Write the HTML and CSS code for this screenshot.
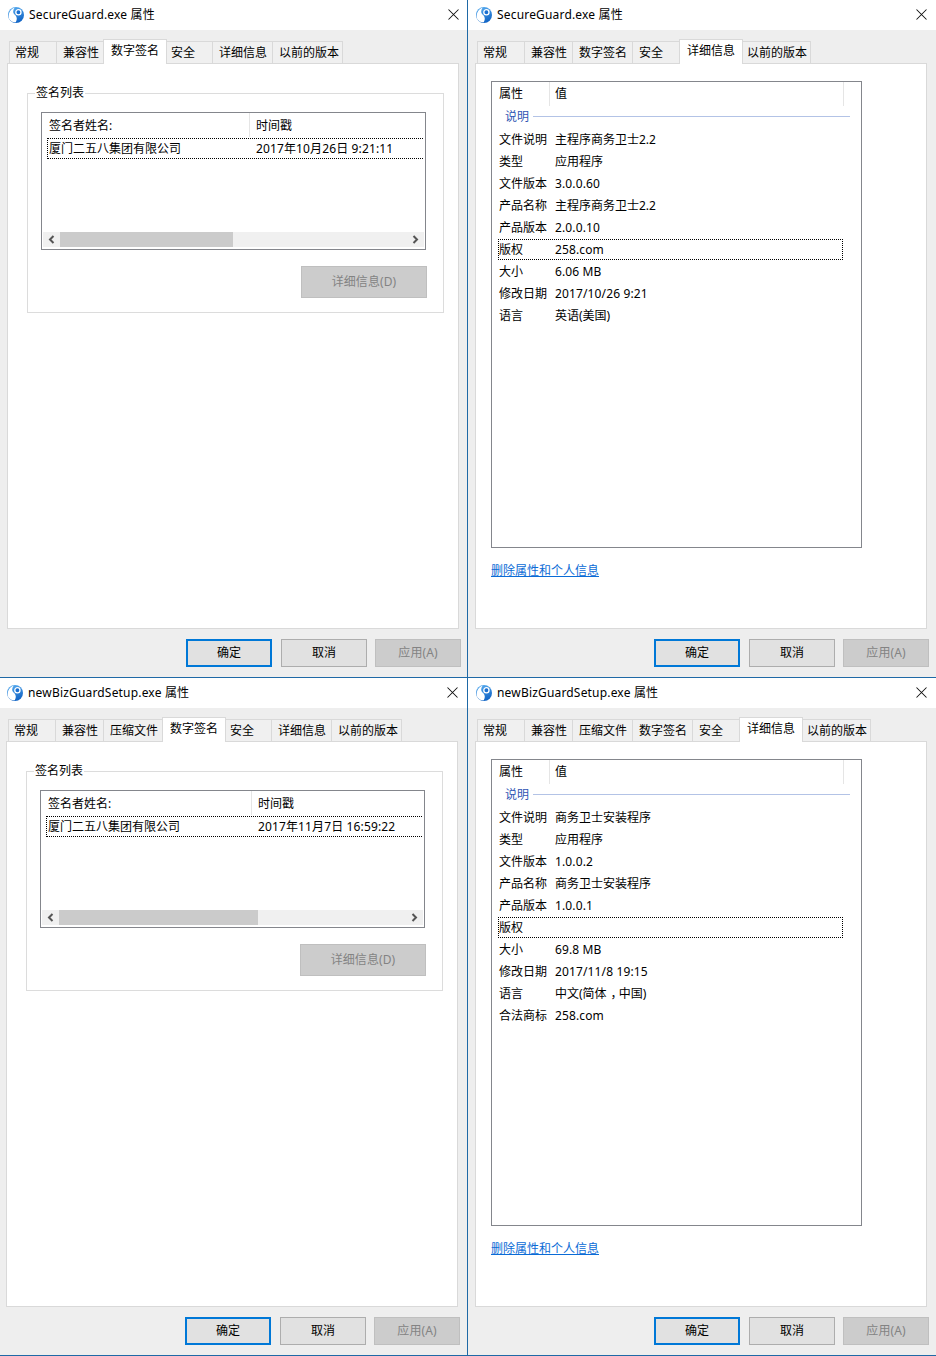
FILE: index.html
```html
<!DOCTYPE html>
<html lang="zh-CN">
<head>
<meta charset="utf-8">
<title>属性</title>
<link rel="stylesheet" href="styles.css">
</head>
<body>
<svg class="defs" width="0" height="0" aria-hidden="true">
  <defs>
    <linearGradient id="orb" x1="0.2" y1="0" x2="0.6" y2="1">
      <stop offset="0" stop-color="#5aaef0"/>
      <stop offset="1" stop-color="#0f62c4"/>
    </linearGradient>
    <symbol id="app" viewBox="0 0 16 16">
      <circle cx="8" cy="8" r="8" fill="url(#orb)"/>
      <path d="M1 11.5C-.2 7 2 2.5 6.5.8 4.6 3.6 4.8 6.2 6.8 7.8c2 1.6 2.8 4.4 1 7.4-3 .4-5.6-1.2-6.8-3.7z" fill="#fff"/>
      <circle cx="10.4" cy="5.2" r="2.6" fill="#1a6fd0" stroke="#fff" stroke-width="1.3"/>
    </symbol>
    <symbol id="close" viewBox="0 0 11 11">
      <path d="M.5.5l10 10M10.5.5l-10 10" stroke="#111" stroke-width="1.05" fill="none"/>
    </symbol>
    <symbol id="left" viewBox="0 0 7 9">
      <path d="M5.5 1L2 4.5 5.5 8" stroke="#555" stroke-width="2" fill="none"/>
    </symbol>
    <symbol id="right" viewBox="0 0 7 9">
      <path d="M1.5 1L5 4.5 1.5 8" stroke="#555" stroke-width="2" fill="none"/>
    </symbol>
  </defs>
</svg>

<main class="desk">

  <section class="win">
    <div class="frame">
      <header class="title">
        <svg class="app-icon"><use href="#app"/></svg>
        <span class="title-text">SecureGuard.exe 属性</span>
        <svg class="close"><use href="#close"/></svg>
      </header>
      <div class="body">
        <nav class="tabs">
          <span class="tab">常规</span>
          <span class="tab">兼容性</span>
          <span class="tab active">数字签名</span>
          <span class="tab">安全</span>
          <span class="tab">详细信息</span>
          <span class="tab">以前的版本</span>
        </nav>
        <div class="panel">
          <fieldset class="group">
            <legend class="legend">签名列表</legend>
            <div class="siglist">
              <div class="sighead">
                <span class="signame">签名者姓名:</span>
                <span class="sigtime">时间戳</span>
              </div>
              <div class="sigrow">
                <span class="signame">厦门二五八集团有限公司</span>
                <span class="sigtime lat">2017年10月26日 9:21:11</span>
              </div>
              <div class="hscroll">
                <span class="arrow"><svg class="chev"><use href="#left"/></svg></span>
                <span class="thumb"></span>
                <span class="track"></span>
                <span class="arrow"><svg class="chev"><use href="#right"/></svg></span>
              </div>
            </div>
            <button class="btn btn-off btn-detail" type="button">详细信息(D)</button>
          </fieldset>
        </div>
        <div class="actions">
          <button class="btn btn-ok" type="button">确定</button>
          <button class="btn" type="button">取消</button>
          <button class="btn btn-off" type="button">应用(A)</button>
        </div>
      </div>
    </div>
  </section>

  <section class="win">
    <div class="frame">
      <header class="title">
        <svg class="app-icon"><use href="#app"/></svg>
        <span class="title-text">SecureGuard.exe 属性</span>
        <svg class="close"><use href="#close"/></svg>
      </header>
      <div class="body">
        <nav class="tabs">
          <span class="tab">常规</span>
          <span class="tab">兼容性</span>
          <span class="tab">数字签名</span>
          <span class="tab">安全</span>
          <span class="tab active">详细信息</span>
          <span class="tab">以前的版本</span>
        </nav>
        <div class="panel">
          <div class="props">
            <div class="prophead">
              <span class="prop-key">属性</span>
              <span class="prop-val">值</span>
            </div>
            <div class="propgroup"><span class="propgroup-name">说明</span><span class="propgroup-line"></span></div>
            <div class="row"><span class="key">文件说明</span><span>主程序商务卫士2.2</span></div>
            <div class="row"><span class="key">类型</span><span>应用程序</span></div>
            <div class="row"><span class="key">文件版本</span><span class="lat">3.0.0.60</span></div>
            <div class="row"><span class="key">产品名称</span><span>主程序商务卫士2.2</span></div>
            <div class="row"><span class="key">产品版本</span><span class="lat">2.0.0.10</span></div>
            <div class="row row-focus"><span class="key">版权</span><span class="lat">258.com</span></div>
            <div class="row"><span class="key">大小</span><span class="lat">6.06 MB</span></div>
            <div class="row"><span class="key">修改日期</span><span class="lat">2017/10/26 9:21</span></div>
            <div class="row"><span class="key">语言</span><span>英语(美国)</span></div>
          </div>
          <a class="link" href="#">删除属性和个人信息</a>
        </div>
        <div class="actions">
          <button class="btn btn-ok" type="button">确定</button>
          <button class="btn" type="button">取消</button>
          <button class="btn btn-off" type="button">应用(A)</button>
        </div>
      </div>
    </div>
  </section>

  <section class="win">
    <div class="frame frame-shift">
      <header class="title">
        <svg class="app-icon"><use href="#app"/></svg>
        <span class="title-text">newBizGuardSetup.exe 属性</span>
        <svg class="close"><use href="#close"/></svg>
      </header>
      <div class="body">
        <nav class="tabs">
          <span class="tab">常规</span>
          <span class="tab">兼容性</span>
          <span class="tab">压缩文件</span>
          <span class="tab active">数字签名</span>
          <span class="tab">安全</span>
          <span class="tab">详细信息</span>
          <span class="tab">以前的版本</span>
        </nav>
        <div class="panel">
          <fieldset class="group">
            <legend class="legend">签名列表</legend>
            <div class="siglist siglist-wide">
              <div class="sighead">
                <span class="signame">签名者姓名:</span>
                <span class="sigtime">时间戳</span>
              </div>
              <div class="sigrow">
                <span class="signame">厦门二五八集团有限公司</span>
                <span class="sigtime lat">2017年11月7日 16:59:22</span>
              </div>
              <div class="hscroll">
                <span class="arrow"><svg class="chev"><use href="#left"/></svg></span>
                <span class="thumb"></span>
                <span class="track"></span>
                <span class="arrow"><svg class="chev"><use href="#right"/></svg></span>
              </div>
            </div>
            <button class="btn btn-off btn-detail" type="button">详细信息(D)</button>
          </fieldset>
        </div>
        <div class="actions">
          <button class="btn btn-ok" type="button">确定</button>
          <button class="btn" type="button">取消</button>
          <button class="btn btn-off" type="button">应用(A)</button>
        </div>
      </div>
    </div>
  </section>

  <section class="win">
    <div class="frame">
      <header class="title">
        <svg class="app-icon"><use href="#app"/></svg>
        <span class="title-text">newBizGuardSetup.exe 属性</span>
        <svg class="close"><use href="#close"/></svg>
      </header>
      <div class="body">
        <nav class="tabs">
          <span class="tab">常规</span>
          <span class="tab">兼容性</span>
          <span class="tab">压缩文件</span>
          <span class="tab">数字签名</span>
          <span class="tab">安全</span>
          <span class="tab active">详细信息</span>
          <span class="tab">以前的版本</span>
        </nav>
        <div class="panel">
          <div class="props">
            <div class="prophead">
              <span class="prop-key">属性</span>
              <span class="prop-val">值</span>
            </div>
            <div class="propgroup"><span class="propgroup-name">说明</span><span class="propgroup-line"></span></div>
            <div class="row"><span class="key">文件说明</span><span>商务卫士安装程序</span></div>
            <div class="row"><span class="key">类型</span><span>应用程序</span></div>
            <div class="row"><span class="key">文件版本</span><span class="lat">1.0.0.2</span></div>
            <div class="row"><span class="key">产品名称</span><span>商务卫士安装程序</span></div>
            <div class="row"><span class="key">产品版本</span><span class="lat">1.0.0.1</span></div>
            <div class="row row-focus"><span class="key">版权</span><span></span></div>
            <div class="row"><span class="key">大小</span><span class="lat">69.8 MB</span></div>
            <div class="row"><span class="key">修改日期</span><span class="lat">2017/11/8 19:15</span></div>
            <div class="row"><span class="key">语言</span><span>中文(简体<span class="comma">，</span>中国)</span></div>
            <div class="row"><span class="key">合法商标</span><span class="lat">258.com</span></div>
          </div>
          <a class="link" href="#">删除属性和个人信息</a>
        </div>
        <div class="actions">
          <button class="btn btn-ok" type="button">确定</button>
          <button class="btn" type="button">取消</button>
          <button class="btn btn-off" type="button">应用(A)</button>
        </div>
      </div>
    </div>
  </section>

</main>
</body>
</html>
```
FILE: styles.css
```css
* { box-sizing: border-box; }

html, body { margin: 0; padding: 0; }

body {
  width: 936px;
  height: 1356px;
  overflow: hidden;
  background: #1f69a6;
  color: #000;
  font: 12px/16px "Noto Sans", "Noto Sans CJK SC", sans-serif;
}

.defs { display: block; width: 0; height: 0; overflow: hidden; }

.desk {
  display: grid;
  grid-template-columns: 467px 468px;
  grid-template-rows: 677px 677px;
  column-gap: 1px;
  row-gap: 1px;
}

.win { overflow: hidden; background: #eeeeee; }

.frame { width: 468px; height: 677px; }
.frame-shift { margin-left: -1px; }

.title {
  display: flex;
  align-items: center;
  width: 100%;
  height: 30px;
  padding: 0 9px 0 8px;
  background: #fff;
}

.app-icon { width: 16px; height: 16px; flex: none; }
.title-text { margin-left: 5px; letter-spacing: .18px; }
.close { width: 11px; height: 11px; margin: 0 0 2px auto; }

.body { padding: 11px 0 0 7px; }

.lat { letter-spacing: .13px; }
.comma { padding: 0 2px 0 4px; font-feature-settings: "halt"; }

.tabs { display: flex; height: 22px; padding-left: 2px; position: relative; z-index: 1; }

.tab {
  min-width: 48px;
  height: 22px;
  padding: 3px 5px 0 6px;
  border-top: 1px solid #d9d9d9;
  border-right: 1px solid #d9d9d9;
  white-space: nowrap;
  background: #f0f0f0;
}
.tab:first-child { padding-left: 5px; border-left: 1px solid #d9d9d9; }
.tab:last-child { padding-right: 3px; }

.active {
  position: relative;
  height: 25px;
  margin: -2px -2px 0;
  padding: 3px 7px 0 7px;
  border-left: 1px solid #d9d9d9;
  background: #fff;
}

.panel {
  width: 452px;
  height: 566px;
  padding: 0;
  border: 1px solid #d9d9d9;
  background: #fff;
}

.group {
  display: block;
  width: 417px;
  min-width: 0;
  margin: 21px 0 0 19px;
  padding: 0 0 14px;
  border: 1px solid #dcdcdc;
}

.legend { margin-left: 7px; padding: 0 1px; line-height: 16px; }

.siglist {
  display: flex;
  flex-direction: column;
  width: 385px;
  height: 138px;
  margin: 11px 0 0 13px;
  border: 1px solid #84868c;
}

.sighead { display: flex; height: 24px; }
.sighead .signame { padding-left: 7px; line-height: 26px; border-right: 1px solid #e5e5e5; height: 24px; width: 208px; }
.sighead .sigtime { padding-left: 6px; line-height: 26px; }

.sigrow {
  display: flex;
  height: 21px;
  margin: 1px 2px 0 5px;
  padding-left: 1px;
  border: 1px dotted #000;
  border-right: 0;
  line-height: 19px;
  white-space: nowrap;
}
.sigrow .signame { width: 207px; }

.siglist-wide .sighead .signame { width: 211px; }
.siglist-wide .sigrow .signame { width: 210px; }

.hscroll {
  display: flex;
  height: 15px;
  margin: auto 1px 2px;
  background: #f0f0f0;
}
.arrow { display: flex; align-items: center; justify-content: center; width: 17px; flex: none; }
.chev { width: 7px; height: 9px; }
.thumb { width: 173px; background: #cbcbcb; }
.siglist-wide .thumb { width: 199px; }
.track { flex: 1; }

.btn {
  width: 86px;
  height: 28px;
  padding: 0;
  border: 1px solid #adadad;
  background: #e1e1e1;
  color: #000;
  font: inherit;
}
.btn-ok { border: 2px solid #0078d7; }
.btn-off { border-color: #bfbfbf; background: #cccccc; color: #838383; letter-spacing: .1px; }

.btn-detail { display: block; width: 126px; height: 32px; margin: 16px 0 0 273px; }

.actions { display: flex; justify-content: flex-end; width: 454px; margin-top: 10px; }
.actions .btn + .btn { margin-left: 9px; }
.actions .btn-off.btn-off { margin-left: 8px; }

.props {
  width: 371px;
  height: 467px;
  margin: 17px 0 0 15px;
  border: 1px solid #84868c;
}

.prophead { display: flex; height: 24px; line-height: 24px; }
.prop-key { width: 58px; padding-left: 7px; border-right: 1px solid #e5e5e5; }
.prop-val { width: 294px; padding-left: 5px; border-right: 1px solid #e5e5e5; }

.propgroup {
  display: flex;
  align-items: center;
  height: 23px;
  padding: 0 11px 0 13px;
  color: #2f55b4;
}
.propgroup-name { margin-bottom: 2px; }
.propgroup-line { flex: 1; height: 1px; margin: -2px 0 0 4px; background: #b3c3e6; }

.row {
  display: flex;
  height: 21px;
  margin-bottom: 1px;
  padding-left: 7px;
  line-height: 21px;
  white-space: nowrap;
}
.key { width: 56px; flex: none; }

.row-focus {
  width: 345px;
  margin-left: 6px;
  padding-left: 0;
  border: 1px dotted #000;
  line-height: 19px;
}

.link {
  display: block;
  width: max-content;
  margin: 15px 0 0 15px;
  color: #0a6bd6;
  text-decoration: underline;
}
```
